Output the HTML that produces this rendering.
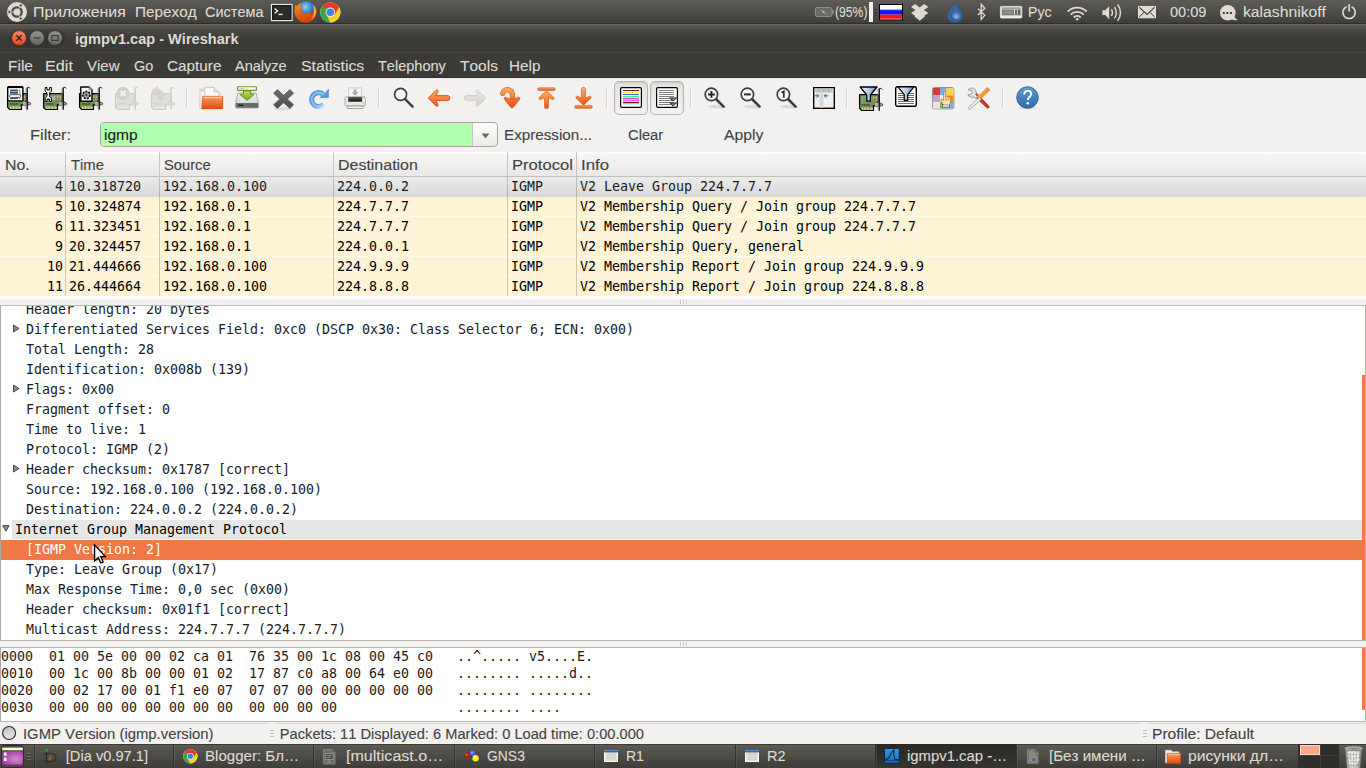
<!DOCTYPE html>
<html lang='en'><head><meta charset='utf-8'><title>igmpv1.cap - Wireshark</title>
<style>
html,body{margin:0;padding:0;}
body{width:1366px;height:768px;overflow:hidden;position:relative;background:#f2f1f0;font-kerning:none;font-variant-ligatures:none;}
.t{position:absolute;white-space:pre;line-height:20px;transform-origin:0 0;}
.sans{font-family:'Liberation Sans',sans-serif;font-size:14.67px;-webkit-text-stroke:0.12px;}
.sansb{font-family:'Liberation Sans',sans-serif;font-weight:bold;font-size:14.67px;}
.mono{font-family:'DejaVu Sans Mono','Liberation Mono',monospace;font-size:13.3px;letter-spacing:-0.0055px;}
svg{display:block;overflow:visible}
</style></head>
<body>
<div style='position:absolute;left:0px;top:0px;width:1366px;height:24px;background:linear-gradient(#5d5c56,#403f3b 94%,#2f2e2b 96%);'></div>
<span class='t sans' style='left:33.01px;top:2.00px;color:#dfdbd2;transform:scaleX(1.0823);'>Приложения</span>
<span class='t sans' style='left:134.56px;top:2.00px;color:#dfdbd2;transform:scaleX(1.0445);'>Переход</span>
<span class='t sans' style='left:205.26px;top:2.00px;color:#dfdbd2;transform:scaleX(0.9914);'>Система</span>
<span class='t sans' style='left:835.24px;top:2.00px;color:#dfdbd2;transform:scaleX(0.8308);'>(95%)</span>
<span class='t sans' style='left:1028.34px;top:2.00px;color:#dfdbd2;transform:scaleX(0.9622);'>Рус</span>
<span class='t sans' style='left:1169.73px;top:2.00px;color:#dfdbd2;transform:scaleX(0.9931);'>00:09</span>
<span class='t sans' style='left:1242.94px;top:2.00px;color:#dfdbd2;transform:scaleX(1.0719);'>kalashnikoff</span>
<div style='position:absolute;left:869px;top:2px;width:4px;height:20px;background:#f2f1f0;'></div>
<div style='position:absolute;left:875px;top:9px;width:2px;height:1px;background:#33322f;'></div>
<div style='position:absolute;left:875px;top:12px;width:2px;height:1px;background:#33322f;'></div>
<div style='position:absolute;left:875px;top:15px;width:2px;height:1px;background:#33322f;'></div>
<div style='position:absolute;left:0px;top:24px;width:1366px;height:29px;background:linear-gradient(#5d5b55,#4a4944 22%,#3c3b37 50%);'></div>
<div style='position:absolute;left:0px;top:24px;width:1366px;height:1px;background:#66645e;'></div>
<div style='position:absolute;left:9px;top:29px;width:57px;height:19px;background:rgba(30,29,27,0.22);border-radius:10px;box-shadow:0 1px 0 rgba(255,255,255,0.05);'></div>
<span class='t sansb' style='left:75.38px;top:29.00px;color:#dfdbd2;transform:scaleX(0.9940);'>igmpv1.cap - Wireshark</span>
<div style='position:absolute;left:0px;top:53px;width:1366px;height:25px;background:#3c3b37;'></div>
<div style='position:absolute;left:0px;top:52px;width:1366px;height:1px;background:#46453f;'></div>
<div style='position:absolute;left:0px;top:77px;width:1366px;height:1px;background:#31302d;'></div>
<span class='t sans' style='left:7.73px;top:56.00px;color:#dfdbd2;transform:scaleX(1.0559);'>File</span>
<span class='t sans' style='left:45.17px;top:56.00px;color:#dfdbd2;transform:scaleX(1.1057);'>Edit</span>
<span class='t sans' style='left:87.43px;top:56.00px;color:#dfdbd2;transform:scaleX(1.0230);'>View</span>
<span class='t sans' style='left:133.77px;top:56.00px;color:#dfdbd2;transform:scaleX(0.9882);'>Go</span>
<span class='t sans' style='left:166.72px;top:56.00px;color:#dfdbd2;transform:scaleX(1.0434);'>Capture</span>
<span class='t sans' style='left:235.47px;top:56.00px;color:#dfdbd2;transform:scaleX(0.9901);'>Analyze</span>
<span class='t sans' style='left:300.78px;top:56.00px;color:#dfdbd2;transform:scaleX(1.0783);'>Statistics</span>
<span class='t sans' style='left:378.17px;top:56.00px;color:#dfdbd2;transform:scaleX(0.9905);'>Telephony</span>
<span class='t sans' style='left:460.15px;top:56.00px;color:#dfdbd2;transform:scaleX(1.0567);'>Tools</span>
<span class='t sans' style='left:509.25px;top:56.00px;color:#dfdbd2;transform:scaleX(1.0405);'>Help</span>
<div style='position:absolute;left:0px;top:78px;width:1366px;height:74px;background:#f2f1f0;'></div>
<div style='position:absolute;left:186px;top:87px;width:1px;height:21px;background:#dad7d3;'></div>
<div style='position:absolute;left:187px;top:87px;width:1px;height:21px;background:#fafaf9;'></div>
<div style='position:absolute;left:378px;top:87px;width:1px;height:21px;background:#dad7d3;'></div>
<div style='position:absolute;left:379px;top:87px;width:1px;height:21px;background:#fafaf9;'></div>
<div style='position:absolute;left:606px;top:87px;width:1px;height:21px;background:#dad7d3;'></div>
<div style='position:absolute;left:607px;top:87px;width:1px;height:21px;background:#fafaf9;'></div>
<div style='position:absolute;left:690px;top:87px;width:1px;height:21px;background:#dad7d3;'></div>
<div style='position:absolute;left:691px;top:87px;width:1px;height:21px;background:#fafaf9;'></div>
<div style='position:absolute;left:846px;top:87px;width:1px;height:21px;background:#dad7d3;'></div>
<div style='position:absolute;left:847px;top:87px;width:1px;height:21px;background:#fafaf9;'></div>
<div style='position:absolute;left:1002px;top:87px;width:1px;height:21px;background:#dad7d3;'></div>
<div style='position:absolute;left:1003px;top:87px;width:1px;height:21px;background:#fafaf9;'></div>
<div style='position:absolute;left:614px;top:81px;width:34px;height:34px;background:linear-gradient(#e3e1de,#f4f3f2);border:1px solid #b9b5ae;border-radius:5px;box-sizing:border-box;box-shadow:inset 0 1px 2px rgba(0,0,0,0.12);'></div>
<div style='position:absolute;left:650px;top:81px;width:34px;height:34px;background:linear-gradient(#e3e1de,#f4f3f2);border:1px solid #b9b5ae;border-radius:5px;box-sizing:border-box;box-shadow:inset 0 1px 2px rgba(0,0,0,0.12);'></div>
<div style='position:absolute;left:100px;top:122px;width:398px;height:25px;background:linear-gradient(#fcfcfb,#eceae7);border:1px solid #a9a59d;border-radius:4px;box-sizing:border-box;'></div>
<div style='position:absolute;left:101px;top:123px;width:371px;height:23px;background:#afffaf;border-radius:3px 0 0 3px;'></div>
<div style='position:absolute;left:472px;top:123px;width:1px;height:23px;background:#c9c5be;'></div>
<svg style='position:absolute;left:480px;top:132px' width='11' height='8'><path d='M1.500 1.500h8l-4 5z' fill='#706e69'/></svg>
<span class='t sans' style='left:29.65px;top:125.00px;color:#424242;transform:scaleX(1.1221);'>Filter:</span>
<span class='t sans' style='left:104.16px;top:125.00px;color:#1a1a1a;transform:scaleX(1.0629);'>igmp</span>
<span class='t sans' style='left:504.15px;top:125.00px;color:#424242;transform:scaleX(1.0383);'>Expression...</span>
<span class='t sans' style='left:627.75px;top:125.00px;color:#424242;transform:scaleX(1.0039);'>Clear</span>
<span class='t sans' style='left:724.07px;top:125.00px;color:#424242;transform:scaleX(1.0726);'>Apply</span>
<div style='position:absolute;left:0px;top:152px;width:1366px;height:24px;background:linear-gradient(#ffffff,#f6f5f4 12%,#e9e8e6);'></div>
<div style='position:absolute;left:0px;top:176px;width:1366px;height:1px;background:#c4c1bc;'></div>
<div style='position:absolute;left:65px;top:152px;width:1px;height:25px;background:#c9c6c1;'></div>
<div style='position:absolute;left:159px;top:152px;width:1px;height:25px;background:#c9c6c1;'></div>
<div style='position:absolute;left:333px;top:152px;width:1px;height:25px;background:#c9c6c1;'></div>
<div style='position:absolute;left:507px;top:152px;width:1px;height:25px;background:#c9c6c1;'></div>
<div style='position:absolute;left:576px;top:152px;width:1px;height:25px;background:#c9c6c1;'></div>
<span class='t sans' style='left:4.70px;top:155.00px;color:#424242;transform:scaleX(1.0796);'>No.</span>
<span class='t sans' style='left:71.17px;top:155.00px;color:#424242;transform:scaleX(1.0121);'>Time</span>
<span class='t sans' style='left:164.33px;top:155.00px;color:#424242;transform:scaleX(1.0052);'>Source</span>
<span class='t sans' style='left:337.99px;top:155.00px;color:#424242;transform:scaleX(1.0893);'>Destination</span>
<span class='t sans' style='left:511.94px;top:155.00px;color:#424242;transform:scaleX(1.1330);'>Protocol</span>
<span class='t sans' style='left:580.74px;top:155.00px;color:#424242;transform:scaleX(1.1511);'>Info</span>
<div style='position:absolute;left:0px;top:177px;width:1366px;height:20px;background:linear-gradient(#ececec,#d8d8d8);'></div>
<div style='position:absolute;left:0px;top:197px;width:1366px;height:19px;background:#fff3d6;'></div>
<div style='position:absolute;left:0px;top:216px;width:1366px;height:1px;background:#fffaee;'></div>
<div style='position:absolute;left:0px;top:217px;width:1366px;height:19px;background:#fff3d6;'></div>
<div style='position:absolute;left:0px;top:236px;width:1366px;height:1px;background:#fffaee;'></div>
<div style='position:absolute;left:0px;top:237px;width:1366px;height:19px;background:#fff3d6;'></div>
<div style='position:absolute;left:0px;top:256px;width:1366px;height:1px;background:#fffaee;'></div>
<div style='position:absolute;left:0px;top:257px;width:1366px;height:19px;background:#fff3d6;'></div>
<div style='position:absolute;left:0px;top:276px;width:1366px;height:1px;background:#fffaee;'></div>
<div style='position:absolute;left:0px;top:277px;width:1366px;height:19px;background:#fff3d6;'></div>
<div style='position:absolute;left:0px;top:296px;width:1366px;height:1px;background:#fffaee;'></div>
<div style='position:absolute;left:65px;top:177px;width:1px;height:119px;background:rgba(120,115,105,0.35);'></div>
<div style='position:absolute;left:159px;top:177px;width:1px;height:119px;background:rgba(120,115,105,0.35);'></div>
<div style='position:absolute;left:333px;top:177px;width:1px;height:119px;background:rgba(120,115,105,0.35);'></div>
<div style='position:absolute;left:507px;top:177px;width:1px;height:119px;background:rgba(120,115,105,0.35);'></div>
<div style='position:absolute;left:576px;top:177px;width:1px;height:119px;background:rgba(120,115,105,0.35);'></div>
<span class='t mono' style='left:55.00px;top:177.00px;color:#1a1a1a;'>4</span>
<span class='t mono' style='left:69.00px;top:177.00px;color:#1a1a1a;'>10.318720</span>
<span class='t mono' style='left:163.00px;top:177.00px;color:#1a1a1a;'>192.168.0.100</span>
<span class='t mono' style='left:337.00px;top:177.00px;color:#1a1a1a;'>224.0.0.2</span>
<span class='t mono' style='left:511.00px;top:177.00px;color:#1a1a1a;'>IGMP</span>
<span class='t mono' style='left:580.00px;top:177.00px;color:#1a1a1a;'>V2 Leave Group 224.7.7.7</span>
<span class='t mono' style='left:55.00px;top:197.00px;color:#000;'>5</span>
<span class='t mono' style='left:69.00px;top:197.00px;color:#000;'>10.324874</span>
<span class='t mono' style='left:163.00px;top:197.00px;color:#000;'>192.168.0.1</span>
<span class='t mono' style='left:337.00px;top:197.00px;color:#000;'>224.7.7.7</span>
<span class='t mono' style='left:511.00px;top:197.00px;color:#000;'>IGMP</span>
<span class='t mono' style='left:580.00px;top:197.00px;color:#000;'>V2 Membership Query / Join group 224.7.7.7</span>
<span class='t mono' style='left:55.00px;top:217.00px;color:#000;'>6</span>
<span class='t mono' style='left:69.00px;top:217.00px;color:#000;'>11.323451</span>
<span class='t mono' style='left:163.00px;top:217.00px;color:#000;'>192.168.0.1</span>
<span class='t mono' style='left:337.00px;top:217.00px;color:#000;'>224.7.7.7</span>
<span class='t mono' style='left:511.00px;top:217.00px;color:#000;'>IGMP</span>
<span class='t mono' style='left:580.00px;top:217.00px;color:#000;'>V2 Membership Query / Join group 224.7.7.7</span>
<span class='t mono' style='left:55.00px;top:237.00px;color:#000;'>9</span>
<span class='t mono' style='left:69.00px;top:237.00px;color:#000;'>20.324457</span>
<span class='t mono' style='left:163.00px;top:237.00px;color:#000;'>192.168.0.1</span>
<span class='t mono' style='left:337.00px;top:237.00px;color:#000;'>224.0.0.1</span>
<span class='t mono' style='left:511.00px;top:237.00px;color:#000;'>IGMP</span>
<span class='t mono' style='left:580.00px;top:237.00px;color:#000;'>V2 Membership Query, general</span>
<span class='t mono' style='left:47.00px;top:257.00px;color:#000;'>10</span>
<span class='t mono' style='left:69.00px;top:257.00px;color:#000;'>21.444666</span>
<span class='t mono' style='left:163.00px;top:257.00px;color:#000;'>192.168.0.100</span>
<span class='t mono' style='left:337.00px;top:257.00px;color:#000;'>224.9.9.9</span>
<span class='t mono' style='left:511.00px;top:257.00px;color:#000;'>IGMP</span>
<span class='t mono' style='left:580.00px;top:257.00px;color:#000;'>V2 Membership Report / Join group 224.9.9.9</span>
<span class='t mono' style='left:47.00px;top:277.00px;color:#000;'>11</span>
<span class='t mono' style='left:69.00px;top:277.00px;color:#000;'>26.444664</span>
<span class='t mono' style='left:163.00px;top:277.00px;color:#000;'>192.168.0.100</span>
<span class='t mono' style='left:337.00px;top:277.00px;color:#000;'>224.8.8.8</span>
<span class='t mono' style='left:511.00px;top:277.00px;color:#000;'>IGMP</span>
<span class='t mono' style='left:580.00px;top:277.00px;color:#000;'>V2 Membership Report / Join group 224.8.8.8</span>
<div style='position:absolute;left:0px;top:296px;width:1366px;height:3px;background:#ffffff;'></div>
<div style='position:absolute;left:0px;top:299px;width:1366px;height:6px;background:#f2f1f0;'></div>
<div style='position:absolute;left:680px;top:300px;width:1px;height:4px;background:#cbc8c3;'></div>
<div style='position:absolute;left:681px;top:300px;width:1px;height:4px;background:#fff;'></div>
<div style='position:absolute;left:683px;top:300px;width:1px;height:4px;background:#cbc8c3;'></div>
<div style='position:absolute;left:684px;top:300px;width:1px;height:4px;background:#fff;'></div>
<div style='position:absolute;left:686px;top:300px;width:1px;height:4px;background:#cbc8c3;'></div>
<div style='position:absolute;left:687px;top:300px;width:1px;height:4px;background:#fff;'></div>
<div style='position:absolute;left:0px;top:305px;width:1366px;height:336px;background:#fff;border:1px solid #bab6b0;border-left-color:#aeaaa3;box-sizing:border-box;'></div>
<div style='position:absolute;left:12px;top:520px;width:1353px;height:19px;background:#e6e6e6;'></div>
<div style='position:absolute;left:1px;top:540px;width:1364px;height:20px;background:#f07746;'></div>
<div style='position:absolute;left:0;top:306px;width:1366px;height:334px;overflow:hidden'>
<span class='t mono' style='left:26.00px;top:-6.00px;color:#1a1a1a;'>Header length: 20 bytes</span>
<span class='t mono' style='left:26.00px;top:14.00px;color:#1a1a1a;'>Differentiated Services Field: 0xc0 (DSCP 0x30: Class Selector 6; ECN: 0x00)</span>
<svg style='position:absolute;left:12px;top:18px' width='9' height='9'><path d='M1.500 1v7l5.600-3.500z' fill='#8a8a8a' stroke='#3f3f3f' stroke-width='0.900' stroke-linejoin='round'/></svg>
<span class='t mono' style='left:26.00px;top:34.00px;color:#1a1a1a;'>Total Length: 28</span>
<span class='t mono' style='left:26.00px;top:54.00px;color:#1a1a1a;'>Identification: 0x008b (139)</span>
<span class='t mono' style='left:26.00px;top:74.00px;color:#1a1a1a;'>Flags: 0x00</span>
<svg style='position:absolute;left:12px;top:78px' width='9' height='9'><path d='M1.500 1v7l5.600-3.500z' fill='#8a8a8a' stroke='#3f3f3f' stroke-width='0.900' stroke-linejoin='round'/></svg>
<span class='t mono' style='left:26.00px;top:94.00px;color:#1a1a1a;'>Fragment offset: 0</span>
<span class='t mono' style='left:26.00px;top:114.00px;color:#1a1a1a;'>Time to live: 1</span>
<span class='t mono' style='left:26.00px;top:134.00px;color:#1a1a1a;'>Protocol: IGMP (2)</span>
<span class='t mono' style='left:26.00px;top:154.00px;color:#1a1a1a;'>Header checksum: 0x1787 [correct]</span>
<svg style='position:absolute;left:12px;top:158px' width='9' height='9'><path d='M1.500 1v7l5.600-3.500z' fill='#8a8a8a' stroke='#3f3f3f' stroke-width='0.900' stroke-linejoin='round'/></svg>
<span class='t mono' style='left:26.00px;top:174.00px;color:#1a1a1a;'>Source: 192.168.0.100 (192.168.0.100)</span>
<span class='t mono' style='left:26.00px;top:194.00px;color:#1a1a1a;'>Destination: 224.0.0.2 (224.0.0.2)</span>
<span class='t mono' style='left:15.00px;top:214.00px;color:#000;'>Internet Group Management Protocol</span>
<svg style='position:absolute;left:2px;top:218px' width='9' height='9'><path d='M0.600 1.600h6.600l-3.300 5.600z' fill='#8a8a8a' stroke='#3f3f3f' stroke-width='0.900' stroke-linejoin='round'/></svg>
<span class='t mono' style='left:26.00px;top:234.00px;color:#fff;'>[IGMP Version: 2]</span>
<span class='t mono' style='left:26.00px;top:254.00px;color:#1a1a1a;'>Type: Leave Group (0x17)</span>
<span class='t mono' style='left:26.00px;top:274.00px;color:#1a1a1a;'>Max Response Time: 0,0 sec (0x00)</span>
<span class='t mono' style='left:26.00px;top:294.00px;color:#1a1a1a;'>Header checksum: 0x01f1 [correct]</span>
<span class='t mono' style='left:26.00px;top:314.00px;color:#1a1a1a;'>Multicast Address: 224.7.7.7 (224.7.7.7)</span>
</div>
<div style='position:absolute;left:1362px;top:375px;width:3px;height:265px;background:#f07746;'></div>
<div style='position:absolute;left:0px;top:641px;width:1366px;height:6px;background:#f2f1f0;'></div>
<div style='position:absolute;left:680px;top:642px;width:1px;height:4px;background:#cbc8c3;'></div>
<div style='position:absolute;left:681px;top:642px;width:1px;height:4px;background:#fff;'></div>
<div style='position:absolute;left:683px;top:642px;width:1px;height:4px;background:#cbc8c3;'></div>
<div style='position:absolute;left:684px;top:642px;width:1px;height:4px;background:#fff;'></div>
<div style='position:absolute;left:686px;top:642px;width:1px;height:4px;background:#cbc8c3;'></div>
<div style='position:absolute;left:687px;top:642px;width:1px;height:4px;background:#fff;'></div>
<div style='position:absolute;left:0px;top:647px;width:1366px;height:75px;background:#fff;border:1px solid #bab6b0;border-left-color:#aeaaa3;box-sizing:border-box;'></div>
<span class='t mono' style='left:1.00px;top:647.00px;color:#1a1a1a;'>0000  01 00 5e 00 00 02 ca 01  76 35 00 1c 08 00 45 c0   ..^..... v5....E.</span>
<span class='t mono' style='left:1.00px;top:664.00px;color:#1a1a1a;'>0010  00 1c 00 8b 00 00 01 02  17 87 c0 a8 00 64 e0 00   ........ .....d..</span>
<span class='t mono' style='left:1.00px;top:681.00px;color:#1a1a1a;'>0020  00 02 17 00 01 f1 e0 07  07 07 00 00 00 00 00 00   ........ ........</span>
<span class='t mono' style='left:1.00px;top:698.00px;color:#1a1a1a;'>0030  00 00 00 00 00 00 00 00  00 00 00 00               ........ ....</span>
<div style='position:absolute;left:1362px;top:648px;width:3px;height:62px;background:#f07746;'></div>
<div style='position:absolute;left:0px;top:722px;width:1366px;height:22px;background:#f2f1f0;'></div>
<div style='position:absolute;left:19px;top:723px;width:250px;height:1px;background:#dcd9d5;'></div>
<div style='position:absolute;left:275px;top:723px;width:866px;height:1px;background:#dcd9d5;'></div>
<div style='position:absolute;left:1147px;top:723px;width:219px;height:1px;background:#dcd9d5;'></div>
<svg style='position:absolute;left:1px;top:725px' width='17' height='17'><defs><linearGradient id='gLed' x1='0' y1='0' x2='0' y2='1'><stop offset='0' stop-color='#c2c2c2'/><stop offset='1' stop-color='#e8e8e8'/></linearGradient></defs><circle cx='8.100' cy='8' r='6.500' fill='url(#gLed)' stroke='#2e2e2e' stroke-width='1.200'/></svg>
<div style='position:absolute;left:270px;top:730px;width:4px;height:1px;background:#c2bfba;'></div>
<div style='position:absolute;left:270px;top:733px;width:4px;height:1px;background:#c2bfba;'></div>
<div style='position:absolute;left:270px;top:736px;width:4px;height:1px;background:#c2bfba;'></div>
<div style='position:absolute;left:1143px;top:730px;width:4px;height:1px;background:#c2bfba;'></div>
<div style='position:absolute;left:1143px;top:733px;width:4px;height:1px;background:#c2bfba;'></div>
<div style='position:absolute;left:1143px;top:736px;width:4px;height:1px;background:#c2bfba;'></div>
<span class='t sans' style='left:23.43px;top:724.00px;color:#424242;transform:scaleX(1.0126);'>IGMP Version (igmp.version)</span>
<span class='t sans' style='left:279.80px;top:724.00px;color:#424242;'>Packets: 11 Displayed: 6 Marked: 0 Load time: 0:00.000</span>
<span class='t sans' style='left:1151.62px;top:724.00px;color:#424242;transform:scaleX(1.0632);'>Profile: Default</span>
<div style='position:absolute;left:0px;top:744px;width:1366px;height:24px;background:linear-gradient(#3b3a36 0,#3b3a36 4%,#5b5a54 5%,#4c4b46 50%,#3e3d39);'></div>
<div style='position:absolute;left:875px;top:744px;width:141px;height:24px;background:linear-gradient(#2b2a27,#353431);'></div>
<div style='position:absolute;left:34px;top:745px;width:1px;height:23px;background:#33322f;'></div>
<div style='position:absolute;left:35px;top:745px;width:1px;height:23px;background:rgba(255,255,255,0.07);'></div>
<div style='position:absolute;left:173px;top:745px;width:1px;height:23px;background:#33322f;'></div>
<div style='position:absolute;left:174px;top:745px;width:1px;height:23px;background:rgba(255,255,255,0.07);'></div>
<div style='position:absolute;left:313px;top:745px;width:1px;height:23px;background:#33322f;'></div>
<div style='position:absolute;left:314px;top:745px;width:1px;height:23px;background:rgba(255,255,255,0.07);'></div>
<div style='position:absolute;left:454px;top:745px;width:1px;height:23px;background:#33322f;'></div>
<div style='position:absolute;left:455px;top:745px;width:1px;height:23px;background:rgba(255,255,255,0.07);'></div>
<div style='position:absolute;left:594px;top:745px;width:1px;height:23px;background:#33322f;'></div>
<div style='position:absolute;left:595px;top:745px;width:1px;height:23px;background:rgba(255,255,255,0.07);'></div>
<div style='position:absolute;left:735px;top:745px;width:1px;height:23px;background:#33322f;'></div>
<div style='position:absolute;left:736px;top:745px;width:1px;height:23px;background:rgba(255,255,255,0.07);'></div>
<div style='position:absolute;left:875px;top:745px;width:1px;height:23px;background:#33322f;'></div>
<div style='position:absolute;left:876px;top:745px;width:1px;height:23px;background:rgba(255,255,255,0.07);'></div>
<div style='position:absolute;left:1016px;top:745px;width:1px;height:23px;background:#33322f;'></div>
<div style='position:absolute;left:1017px;top:745px;width:1px;height:23px;background:rgba(255,255,255,0.07);'></div>
<div style='position:absolute;left:1156px;top:745px;width:1px;height:23px;background:#33322f;'></div>
<div style='position:absolute;left:1157px;top:745px;width:1px;height:23px;background:rgba(255,255,255,0.07);'></div>
<span class='t sans' style='left:65.75px;top:746.00px;color:#dfdbd2;'>[Dia v0.97.1]</span>
<span class='t sans' style='left:204.76px;top:746.00px;color:#dfdbd2;transform:scaleX(1.0285);'>Blogger: Бл…</span>
<span class='t sans' style='left:345.55px;top:746.00px;color:#dfdbd2;transform:scaleX(1.0953);'>[multicast.o…</span>
<span class='t sans' style='left:486.60px;top:746.00px;color:#dfdbd2;transform:scaleX(0.9490);'>GNS3</span>
<span class='t sans' style='left:626.05px;top:746.00px;color:#dfdbd2;transform:scaleX(0.9564);'>R1</span>
<span class='t sans' style='left:766.80px;top:746.00px;color:#dfdbd2;transform:scaleX(0.9934);'>R2</span>
<span class='t sans' style='left:907.40px;top:746.00px;color:#dfdbd2;transform:scaleX(1.0149);'>igmpv1.cap -…</span>
<span class='t sans' style='left:1048.52px;top:746.00px;color:#dfdbd2;transform:scaleX(1.0307);'>[Без имени …</span>
<span class='t sans' style='left:1187.99px;top:746.00px;color:#dfdbd2;transform:scaleX(1.0708);'>рисунки дл…</span>
<div style='position:absolute;left:1298px;top:744px;width:41px;height:24px;background:#2f2e2b;'></div>
<div style='position:absolute;left:1300px;top:745px;width:20px;height:10px;background:#f8a58a;border:1px solid #fcd9cc;box-sizing:border-box;'></div>
<div style='position:absolute;left:1298px;top:755px;width:41px;height:1px;background:#403f3b;'></div>
<div style='position:absolute;left:1320px;top:744px;width:1px;height:24px;background:#403f3b;'></div>
<div style='position:absolute;left:27px;top:753px;width:4px;height:1px;background:#6b6a64;'></div>
<div style='position:absolute;left:27px;top:754px;width:4px;height:1px;background:#3a3935;'></div>
<div style='position:absolute;left:27px;top:756px;width:4px;height:1px;background:#6b6a64;'></div>
<div style='position:absolute;left:27px;top:757px;width:4px;height:1px;background:#3a3935;'></div>
<div style='position:absolute;left:27px;top:759px;width:4px;height:1px;background:#6b6a64;'></div>
<div style='position:absolute;left:27px;top:760px;width:4px;height:1px;background:#3a3935;'></div>
<svg width='0' height='0' style='position:absolute'><defs>
<linearGradient id='gOr' x1='0' y1='0' x2='0' y2='1'><stop offset='0' stop-color='#f9b26a'/><stop offset='1' stop-color='#e8541a'/></linearGradient>
<linearGradient id='gOrH' x1='0' y1='0' x2='1' y2='1'><stop offset='0' stop-color='#f8a95c'/><stop offset='1' stop-color='#e9561b'/></linearGradient>
<linearGradient id='gGy' x1='0' y1='0' x2='0' y2='1'><stop offset='0' stop-color='#e9e7e4'/><stop offset='1' stop-color='#d3d0cc'/></linearGradient>
<linearGradient id='gFold' x1='0' y1='0' x2='0' y2='1'><stop offset='0' stop-color='#f6c48a'/><stop offset='0.25' stop-color='#f08a4a'/><stop offset='1' stop-color='#e24a12'/></linearGradient>
<linearGradient id='gBlue' x1='0' y1='0' x2='0' y2='1'><stop offset='0' stop-color='#5e9bd6'/><stop offset='1' stop-color='#2f6aa6'/></linearGradient>
<linearGradient id='gFun' x1='0' y1='0' x2='1' y2='0'><stop offset='0' stop-color='#ffffff'/><stop offset='1' stop-color='#6f9bd0'/></linearGradient>
<linearGradient id='gGrn' x1='0' y1='0' x2='0' y2='1'><stop offset='0' stop-color='#c6e05a'/><stop offset='1' stop-color='#6fa81f'/></linearGradient>
<linearGradient id='gHdd' x1='0' y1='0' x2='0' y2='1'><stop offset='0' stop-color='#f4f4f3'/><stop offset='1' stop-color='#c9c9c7'/></linearGradient>
<linearGradient id='gPcb' x1='0' y1='0' x2='1' y2='1'><stop offset='0' stop-color='#8aa86f'/><stop offset='1' stop-color='#5c7c47'/></linearGradient>
<linearGradient id='gOrS' gradientUnits='userSpaceOnUse' x1='0' y1='0' x2='0' y2='16'><stop offset='0' stop-color='#f9b56e'/><stop offset='1' stop-color='#ee6a2a'/></linearGradient>
<linearGradient id='gOr2' x1='0' y1='0' x2='0' y2='1'><stop offset='0' stop-color='#f07a34'/><stop offset='1' stop-color='#e8541a'/></linearGradient>
<linearGradient id='gBtn' x1='0' y1='0' x2='0' y2='1'><stop offset='0' stop-color='#e4e2df'/><stop offset='0.5' stop-color='#eceae8'/><stop offset='1' stop-color='#f6f5f4'/></linearGradient>
<linearGradient id='gWb' x1='0' y1='0' x2='0' y2='1'><stop offset='0' stop-color='#97958e'/><stop offset='1' stop-color='#65635d'/></linearGradient></defs></svg>
<svg style='position:absolute;left:7px;top:86px' width='24' height='24' viewBox='0 0 24 24' preserveAspectRatio='none'><g opacity='1'>
<path d='M0.600 7.600h19v7.600h-1v3.700h-4.200v4.500h-11.800l-2-2z' fill='url(#gPcb)' stroke='#000' stroke-width='1.300' stroke-linejoin='round'/>
<rect x='2.800' y='20.600' width='11' height='2.200' fill='#e9d88e'/>
<rect x='4.300' y='20.600' width='1' height='2.200' fill='#6f8a57'/><rect x='7.300' y='20.600' width='1' height='2.200' fill='#6f8a57'/><rect x='10.300' y='20.600' width='1' height='2.200' fill='#6f8a57'/>
<rect x='2.800' y='17' width='7.800' height='1.700' fill='#3d4a2b'/>
<rect x='4.400' y='17' width='0.700' height='1.700' fill='#6f8a57'/><rect x='6.400' y='17' width='0.700' height='1.700' fill='#6f8a57'/><rect x='8.400' y='17' width='0.700' height='1.700' fill='#6f8a57'/>
<rect x='14' y='9.600' width='1' height='4.400' fill='#d9c9a0'/><rect x='16.600' y='9.600' width='1' height='4.400' fill='#d9c9a0'/>
<rect x='14' y='12' width='1' height='1.300' fill='#d8452a'/><rect x='16.600' y='12' width='1' height='1.300' fill='#d8452a'/>
<rect x='8.600' y='10' width='3.800' height='4.200' rx='1' fill='#b0b0ae'/>
<rect x='16' y='16' width='4' height='3' fill='#b0b0ae'/>
<path d='M20.200 1.600v22.200' stroke='#000' stroke-width='1.300' fill='none'/>
<path d='M20.200 2.200c0.800-1.200 2.200-1 3 0.200' stroke='#000' stroke-width='1' fill='none'/>
<path d='M19 2.500v20' stroke='#8a8a8a' stroke-width='0.800' fill='none'/>
<path d='M21 15.800l2.600 1.200v1.600l-2.600 0.600z' fill='#b0b0ae' stroke='#000' stroke-width='0.500'/>
</g>
<rect x='0.7' y='0.7' width='15.2' height='14.2' rx='1' fill='#fff' stroke='#000' stroke-width='1.4'/>
<rect x='0.7' y='0.5' width='15.2' height='1.6' fill='#000'/>
<path d='M3 4.2h8M3 6.2h8M3 8h8M3 12.2h8' stroke='#000' stroke-width='1'/>
<path d='M12.3 4.2h1M12.3 6.2h1M12.3 8.2h1M12.3 12.2h1' stroke='#000' stroke-width='1'/>
<rect x='2.4' y='8.7' width='11.2' height='2.8' rx='1.4' fill='#fff' stroke='#3a6a9a' stroke-width='1'/>
</svg>
<svg style='position:absolute;left:43px;top:86px' width='24' height='24' viewBox='0 0 24 24' preserveAspectRatio='none'><g opacity='1'>
<path d='M0.600 7.600h19v7.600h-1v3.700h-4.200v4.500h-11.800l-2-2z' fill='url(#gPcb)' stroke='#000' stroke-width='1.300' stroke-linejoin='round'/>
<rect x='2.800' y='20.600' width='11' height='2.200' fill='#e9d88e'/>
<rect x='4.300' y='20.600' width='1' height='2.200' fill='#6f8a57'/><rect x='7.300' y='20.600' width='1' height='2.200' fill='#6f8a57'/><rect x='10.300' y='20.600' width='1' height='2.200' fill='#6f8a57'/>
<rect x='2.800' y='17' width='7.800' height='1.700' fill='#3d4a2b'/>
<rect x='4.400' y='17' width='0.700' height='1.700' fill='#6f8a57'/><rect x='6.400' y='17' width='0.700' height='1.700' fill='#6f8a57'/><rect x='8.400' y='17' width='0.700' height='1.700' fill='#6f8a57'/>
<rect x='14' y='9.600' width='1' height='4.400' fill='#d9c9a0'/><rect x='16.600' y='9.600' width='1' height='4.400' fill='#d9c9a0'/>
<rect x='14' y='12' width='1' height='1.300' fill='#d8452a'/><rect x='16.600' y='12' width='1' height='1.300' fill='#d8452a'/>
<rect x='8.600' y='10' width='3.800' height='4.200' rx='1' fill='#b0b0ae'/>
<rect x='16' y='16' width='4' height='3' fill='#b0b0ae'/>
<path d='M20.200 1.600v22.200' stroke='#000' stroke-width='1.300' fill='none'/>
<path d='M20.200 2.200c0.800-1.200 2.200-1 3 0.200' stroke='#000' stroke-width='1' fill='none'/>
<path d='M19 2.500v20' stroke='#8a8a8a' stroke-width='0.800' fill='none'/>
<path d='M21 15.800l2.600 1.200v1.600l-2.600 0.600z' fill='#b0b0ae' stroke='#000' stroke-width='0.500'/>
</g>
<path transform='translate(0,0.700)' d='M2.2 0.8h1.8v2.4h2.6v-2.4h1.8v3.6l-1.8 1.8v3.4l1.8 1.8v3.4h-1.8v-2.4h-2.6v2.4h-1.8v-3.4l1.8-1.8v-3.4l-1.8-1.8z' fill='#fff' stroke='#000' stroke-width='1' stroke-linejoin='round'/>
</svg>
<svg style='position:absolute;left:79px;top:86px' width='24' height='24' viewBox='0 0 24 24' preserveAspectRatio='none'><g opacity='1'>
<path d='M0.600 7.600h19v7.600h-1v3.700h-4.200v4.500h-11.800l-2-2z' fill='url(#gPcb)' stroke='#000' stroke-width='1.300' stroke-linejoin='round'/>
<rect x='2.800' y='20.600' width='11' height='2.200' fill='#e9d88e'/>
<rect x='4.300' y='20.600' width='1' height='2.200' fill='#6f8a57'/><rect x='7.300' y='20.600' width='1' height='2.200' fill='#6f8a57'/><rect x='10.300' y='20.600' width='1' height='2.200' fill='#6f8a57'/>
<rect x='2.800' y='17' width='7.800' height='1.700' fill='#3d4a2b'/>
<rect x='4.400' y='17' width='0.700' height='1.700' fill='#6f8a57'/><rect x='6.400' y='17' width='0.700' height='1.700' fill='#6f8a57'/><rect x='8.400' y='17' width='0.700' height='1.700' fill='#6f8a57'/>
<rect x='14' y='9.600' width='1' height='4.400' fill='#d9c9a0'/><rect x='16.600' y='9.600' width='1' height='4.400' fill='#d9c9a0'/>
<rect x='14' y='12' width='1' height='1.300' fill='#d8452a'/><rect x='16.600' y='12' width='1' height='1.300' fill='#d8452a'/>
<rect x='8.600' y='10' width='3.800' height='4.200' rx='1' fill='#b0b0ae'/>
<rect x='16' y='16' width='4' height='3' fill='#b0b0ae'/>
<path d='M20.200 1.600v22.200' stroke='#000' stroke-width='1.300' fill='none'/>
<path d='M20.200 2.200c0.800-1.200 2.200-1 3 0.200' stroke='#000' stroke-width='1' fill='none'/>
<path d='M19 2.500v20' stroke='#8a8a8a' stroke-width='0.800' fill='none'/>
<path d='M21 15.800l2.600 1.200v1.600l-2.600 0.600z' fill='#b0b0ae' stroke='#000' stroke-width='0.500'/>
</g>
<path d='M1.8 1h8.2l3 3v11.2h-11.2z' fill='#fff' stroke='#000' stroke-width='1.4' stroke-linejoin='round'/>
<path d='M10 1v3h3' fill='#ddd' stroke='#555' stroke-width='0.6'/>
<circle cx='7.4' cy='9' r='3.6' fill='#8a8a86' stroke='#000' stroke-width='1.6' stroke-dasharray='2 1.1'/>
<circle cx='7.4' cy='9' r='2.6' fill='#9a9a96'/>
<circle cx='7.4' cy='9' r='1' fill='#333'/>
</svg>
<svg style='position:absolute;left:115px;top:86px' width='24' height='24' viewBox='0 0 24 24' preserveAspectRatio='none'><g opacity='1'>
<path d='M0.600 7.600h19v7.600h-1v3.700h-4.200v4.500h-11.800l-2-2z' fill='#e0deda' stroke='#cdcac6' stroke-width='1.300' stroke-linejoin='round'/>
<rect x='2.800' y='20.600' width='11' height='2.200' fill='#e9e7e4'/>
<rect x='4.300' y='20.600' width='1' height='2.200' fill='#dcdad6'/><rect x='7.300' y='20.600' width='1' height='2.200' fill='#dcdad6'/><rect x='10.300' y='20.600' width='1' height='2.200' fill='#dcdad6'/>
<rect x='2.800' y='17' width='7.800' height='1.700' fill='#d3d0cc'/>
<rect x='4.400' y='17' width='0.700' height='1.700' fill='#dcdad6'/><rect x='6.400' y='17' width='0.700' height='1.700' fill='#dcdad6'/><rect x='8.400' y='17' width='0.700' height='1.700' fill='#dcdad6'/>
<rect x='14' y='9.600' width='1' height='4.400' fill='#e8e6e3'/><rect x='16.600' y='9.600' width='1' height='4.400' fill='#e8e6e3'/>
<rect x='14' y='12' width='1' height='1.300' fill='#d8d5d2'/><rect x='16.600' y='12' width='1' height='1.300' fill='#d8d5d2'/>
<rect x='8.600' y='10' width='3.800' height='4.200' rx='1' fill='#dcdad7'/>
<rect x='16' y='16' width='4' height='3' fill='#dcdad7'/>
<path d='M20.200 1.600v22.200' stroke='#cdcac6' stroke-width='1.300' fill='none'/>
<path d='M20.200 2.200c0.800-1.200 2.200-1 3 0.200' stroke='#cdcac6' stroke-width='1' fill='none'/>
<path d='M19 2.500v20' stroke='#dddbd7' stroke-width='0.800' fill='none'/>
<path d='M21 15.800l2.600 1.200v1.600l-2.600 0.600z' fill='#dcdad7' stroke='#cdcac6' stroke-width='0.500'/>
</g>
<circle cx='8' cy='7.4' r='6.6' fill='#d4d1cd'/>
<path d='M5.6 5l4.8 4.8M10.4 5l-4.8 4.8' stroke='#f4f3f2' stroke-width='2.2' stroke-linecap='butt'/>
</svg>
<svg style='position:absolute;left:151px;top:86px' width='24' height='24' viewBox='0 0 24 24' preserveAspectRatio='none'><g opacity='1'>
<path d='M0.600 7.600h19v7.600h-1v3.700h-4.200v4.500h-11.800l-2-2z' fill='#e0deda' stroke='#cdcac6' stroke-width='1.300' stroke-linejoin='round'/>
<rect x='2.800' y='20.600' width='11' height='2.200' fill='#e9e7e4'/>
<rect x='4.300' y='20.600' width='1' height='2.200' fill='#dcdad6'/><rect x='7.300' y='20.600' width='1' height='2.200' fill='#dcdad6'/><rect x='10.300' y='20.600' width='1' height='2.200' fill='#dcdad6'/>
<rect x='2.800' y='17' width='7.800' height='1.700' fill='#d3d0cc'/>
<rect x='4.400' y='17' width='0.700' height='1.700' fill='#dcdad6'/><rect x='6.400' y='17' width='0.700' height='1.700' fill='#dcdad6'/><rect x='8.400' y='17' width='0.700' height='1.700' fill='#dcdad6'/>
<rect x='14' y='9.600' width='1' height='4.400' fill='#e8e6e3'/><rect x='16.600' y='9.600' width='1' height='4.400' fill='#e8e6e3'/>
<rect x='14' y='12' width='1' height='1.300' fill='#d8d5d2'/><rect x='16.600' y='12' width='1' height='1.300' fill='#d8d5d2'/>
<rect x='8.600' y='10' width='3.800' height='4.200' rx='1' fill='#dcdad7'/>
<rect x='16' y='16' width='4' height='3' fill='#dcdad7'/>
<path d='M20.200 1.600v22.200' stroke='#cdcac6' stroke-width='1.300' fill='none'/>
<path d='M20.200 2.200c0.800-1.200 2.200-1 3 0.200' stroke='#cdcac6' stroke-width='1' fill='none'/>
<path d='M19 2.500v20' stroke='#dddbd7' stroke-width='0.800' fill='none'/>
<path d='M21 15.800l2.600 1.200v1.600l-2.600 0.600z' fill='#dcdad7' stroke='#cdcac6' stroke-width='0.500'/>
</g>
<path d='M0.8 5.2l5.4-4.8v3c4.5 0 6.6 2.6 6.6 5.4c0 2.6-1.8 4.6-4.6 4.6v-2.8c1.2 0 2-0.8 2-1.9c0-1.4-1.2-2.3-4-2.3v3.4z' fill='#dbd8d4' stroke='#cfccc8' stroke-width='0.8' stroke-linejoin='round'/>
</svg>
<svg style='position:absolute;left:199px;top:86px' width='24' height='24' viewBox='0 0 24 24' preserveAspectRatio='none'>
<path d='M0.900 3h6.500v19.800h-6.500z' fill='#f3f2f0' stroke='#c4c1bd' stroke-width='0.800'/>
<rect x='1.800' y='4.400' width='3' height='0.900' fill='#f0a24a'/>
<path d='M6 1.300h9.200l4.400 4.400v16.800h-13.600z' fill='#f8f8f7' stroke='#bfbcb8' stroke-width='0.800' stroke-linejoin='round'/>
<path d='M15.200 1.300v4.400h4.400' fill='#e4e3e1' stroke='#bfbcb8' stroke-width='0.800' stroke-linejoin='round'/>
<path d='M19.800 6.500h1.400v16h-1.400z' fill='#ecebe9' stroke='#c9c6c2' stroke-width='0.600'/>
<path d='M3.800 10.400h19.800v12.300h-20.800z' fill='url(#gFold)' stroke='#d6460f' stroke-width='0.800' stroke-linejoin='round'/>
<path d='M4.400 11.200h18.600' stroke='#f9d9b0' stroke-width='0.900'/>
</svg>
<svg style='position:absolute;left:235px;top:86px' width='24' height='22.6' viewBox='0 0 24 24.200' preserveAspectRatio='none'>
<path d='M3 7.5h18l2.4 10.5v4.6c0 0.6-0.4 1-1 1h-20.8c-0.6 0-1-0.4-1-1v-4.6z' fill='url(#gHdd)' stroke='#a5a5a2' stroke-width='0.9' stroke-linejoin='round'/>
<ellipse cx='12' cy='14' rx='8.2' ry='3.8' fill='none' stroke='#dededc' stroke-width='1.2'/>
<path d='M0.8 18.2h22.4v4.2c0 0.6-0.4 1-1 1h-20.4c-0.6 0-1-0.4-1-1z' fill='#6b6b69'/>
<rect x='3.4' y='20' width='4.8' height='1.5' fill='#1a1a1a'/>
<rect x='2.6' y='0.8' width='18.8' height='4' rx='0.8' fill='#fff' stroke='#6a9a2a' stroke-width='1.3'/>
<path d='M4.6 2.8h5M11.8 1.8v2.2' stroke='#b9b9b6' stroke-width='0.9'/>
<path d='M8.4 5.2h7.2v3.6h3.6l-7.2 6.6l-7.2-6.6h3.6z' fill='url(#gGrn)' stroke='#5d8f1c' stroke-width='1' stroke-linejoin='round'/>
</svg>
<svg style='position:absolute;left:272.6px;top:89px' width='20.8' height='20' viewBox='0 0 20.8 20' preserveAspectRatio='none'>
<defs><linearGradient id='gCx' x1='0' y1='0' x2='0' y2='1'><stop offset='0' stop-color='#6e6e6c'/><stop offset='1' stop-color='#4e4e4c'/></linearGradient></defs>
<ellipse cx='10.600' cy='19.600' rx='9' ry='1.500' fill='#dbd9d5'/>
<path d='M0.600 4.200l3.700-3.600l6.300 5.700l6.300-5.700l3.700 3.600l-6.200 5.800l6.200 5.800l-3.700 3.600l-6.300-5.700l-6.300 5.700l-3.700-3.600l6.200-5.800z' fill='url(#gCx)' stroke='#4c4c4a' stroke-width='0.700' stroke-linejoin='round'/>
</svg>
<svg style='position:absolute;left:308px;top:87px' width='24' height='24' viewBox='0 0 24 24' preserveAspectRatio='none'>
<defs><linearGradient id='gRl' x1='0.200' y1='0' x2='1' y2='1'><stop offset='0' stop-color='#5a98d8'/><stop offset='0.720' stop-color='#6ba6e0'/><stop offset='1' stop-color='#8abcea' stop-opacity='0.150'/></linearGradient></defs>
<path d='M15.200 7.300A7 7 0 1 0 15.860 17.200' fill='none' stroke='url(#gRl)' stroke-width='5.200' stroke-linecap='butt'/>
<path d='M15.200 7.300A7 7 0 1 0 15.860 17.200' fill='none' stroke='#a9cff2' stroke-width='1.600' opacity='0.750'/>
<path d='M20.400 2.200v8.400h-8.600l3.600-2.600l2.400-2.600z' fill='#5a98d8' stroke='#4a8ad0' stroke-width='0.700' stroke-linejoin='round'/>
</svg>
<svg style='position:absolute;left:344px;top:86.6px' width='22.4' height='22.2' viewBox='0 0 24 24' preserveAspectRatio='none'>
<path d='M5 1h14v10h-14z' fill='#f6f6f5' stroke='#bdbdbb' stroke-width='0.8'/>
<path d='M10.6 2.6h2.8v3h2.4l-3.8 3.8l-3.8-3.8h2.4z' fill='#a9a9a7'/>
<path d='M2.6 10.6h18.8c1 0 1.6 0.6 1.6 1.6v7.2c0 0.8-0.6 1.2-1.4 1.2h-19.2c-0.8 0-1.4-0.4-1.4-1.2v-7.2c0-1 0.6-1.6 1.6-1.6z' fill='#e9e9e8' stroke='#a0a09e' stroke-width='0.9'/>
<rect x='4.6' y='11' width='14.8' height='5' fill='#2a2a2a'/>
<rect x='4.6' y='11' width='14.8' height='1.6' fill='#555'/>
<circle cx='20.6' cy='17.4' r='0.8' fill='#7ad03a'/>
<path d='M3.6 20.6h16.8v2c0 0.4-0.3 0.6-0.6 0.6h-15.6c-0.3 0-0.6-0.2-0.6-0.6z' fill='#fdfdfd' stroke='#8a8a88' stroke-width='0.9'/>
</svg>
<svg style='position:absolute;left:392px;top:86px' width='24' height='24' viewBox='0 0 24 24' preserveAspectRatio='none'>
<path d='M13.4 13.4l7.2 7.2' stroke='#3d3d3d' stroke-width='2.4' stroke-linecap='round'/>
<circle cx='8.6' cy='8.4' r='6' fill='#f4f4f3' stroke='#3d3d3d' stroke-width='1.6'/>
</svg>
<svg style='position:absolute;left:427px;top:89px' width='24' height='18' viewBox='0 0 24 18' preserveAspectRatio='none'><path d='M1.2 9.2l7.6-7.8c0.9-0.9 2.4-0.6 2.4 0.8l-2.2 4.4h11.6c1.6 0 2.2 1 2.2 2.4s-0.6 2.6-2.2 2.6h-11.6l2.2 4.4c0 1.4-1.5 1.7-2.4 0.8z' fill='url(#gOr)' stroke='#d9551c' stroke-width='0.9' stroke-linejoin='round'/></svg>
<svg style='position:absolute;left:463px;top:89px' width='24' height='18' viewBox='0 0 24 18' preserveAspectRatio='none'><g transform='translate(24,0) scale(-1,1)'><path d='M1.2 9.2l7.6-7.8c0.9-0.9 2.4-0.6 2.4 0.8l-2.2 4.4h11.6c1.6 0 2.2 1 2.2 2.4s-0.6 2.6-2.2 2.6h-11.6l2.2 4.4c0 1.4-1.5 1.7-2.4 0.8z' fill='url(#gGy)' stroke='#d0cdc9' stroke-width='0.9' stroke-linejoin='round'/></g></svg>
<svg style='position:absolute;left:498.6px;top:86px' width='23' height='23' viewBox='0 0 23 23' preserveAspectRatio='none'>
<path d='M3.800 7.400c0.800-3 3.600-4.200 6.200-3.500c3.200 1.100 4 4.500 3.200 9.600' fill='none' stroke='#dd5a1e' stroke-width='5.200' stroke-linecap='round'/>
<path d='M3.800 7.400c0.800-3 3.600-4.200 6.200-3.500c3.200 1.100 4 4.500 3.200 9.600' fill='none' stroke='url(#gOrS)' stroke-width='3.900' stroke-linecap='round'/>
<path d='M5.300 13.200c-0.800-1.100 0.200-2.300 1.500-1.900l4.200 1.700h4l4.200-1.700c1.300-0.400 2.300 0.800 1.500 1.900l-6.500 8.200c-0.600 0.800-1.800 0.800-2.400 0z' fill='url(#gOr2)' stroke='#dd5a1e' stroke-width='0.800' stroke-linejoin='round'/>
</svg>
<svg style='position:absolute;left:537px;top:87px' width='19' height='22' viewBox='0 0 19 22' preserveAspectRatio='none'>
<path d='M1.6 0.8h15.800c1.2 0 1.2 2.600 0 2.600h-15.800c-1.200 0-1.200-2.600 0-2.600z' fill='url(#gOr)' stroke='#e0621f' stroke-width='0.7'/>
<path d='M9.500 3.6l7.400 7c0.800 1-0.200 2.400-1.400 2l-4-1.800v9.600c0 1.600-4 1.600-4 0v-9.600l-4 1.800c-1.200 0.400-2.200-1-1.400-2z' fill='url(#gOr)' stroke='#e0621f' stroke-width='0.7' stroke-linejoin='round'/>
</svg>
<svg style='position:absolute;left:574px;top:87px' width='19' height='22' viewBox='0 0 19 22' preserveAspectRatio='none'>
<path d='M1.6 18.400h15.800c1.200 0 1.200 2.800 0 2.800h-15.800c-1.200 0-1.200-2.800 0-2.800z' fill='url(#gOr)' stroke='#e0621f' stroke-width='0.7'/>
<path d='M9.500 18.200l7.400-7c0.800-1-0.200-2.400-1.400-2l-4 1.800v-9.400c0-1.600-4-1.600-4 0v9.400l-4-1.800c-1.200-0.400-2.200 1-1.400 2z' fill='url(#gOr)' stroke='#e0621f' stroke-width='0.7' stroke-linejoin='round'/>
</svg>
<svg style='position:absolute;left:620px;top:87px' width='22' height='21' viewBox='0 0 22 21' preserveAspectRatio='none'>
<rect x='0.600' y='0.600' width='20.800' height='19.800' rx='1.300' fill='#fff' stroke='#000' stroke-width='1.200'/>
<path d='M3 3.500h16' stroke='#8b1a1a' stroke-width='1'/>
<path d='M3 5.500h16' stroke='#f4f45a' stroke-width='1.300'/>
<path d='M3 7.500h16' stroke='#4a6af0' stroke-width='1.200'/>
<path d='M3 9.500h16' stroke='#4af08a' stroke-width='1.200'/>
<path d='M3 11.300h16' stroke='#e04ae0' stroke-width='1.300'/>
<path d='M3 12.500h16' stroke='#9a9a9a' stroke-width='0.600'/>
<path d='M3 13.700h16' stroke='#ff4aff' stroke-width='1.200'/>
<path d='M3 15.500h16' stroke='#8b1a1a' stroke-width='1.100'/>
<path d='M3 16.700h16' stroke='#4ad8e8' stroke-width='1.200'/>
</svg>
<svg style='position:absolute;left:656px;top:87px' width='22' height='21' viewBox='0 0 22 21' preserveAspectRatio='none'>
<rect x='0.600' y='0.600' width='20.800' height='19.800' rx='1.300' fill='#fff' stroke='#000' stroke-width='1.200'/>
<path d='M3 3.5h15M3 5.500h15M3 7.500h15M3 9.500h15M3 11.500h15M3 13.500h15M3 15.500h15M3 17.500h12' stroke='#7e7e7e' stroke-width='1'/>
<path d='M13 10.400h8.300l-3.600 3.600h-1.200z' fill='#222'/><path d='M15 11.400h4.500l-1.900 1.700h-0.700z' fill='#999'/>
<path d='M13 15.400h8.300l-3.600 3.600h-1.200z' fill='#222'/><path d='M15 16.400h4.500l-1.900 1.700h-0.700z' fill='#999'/>
</svg>
<svg style='position:absolute;left:703px;top:86px' width='24' height='24' viewBox='0 0 24 24' preserveAspectRatio='none'>
<ellipse cx='14' cy='20.5' rx='9' ry='1.8' fill='#dcdad7'/>
<path d='M13 13l7.6 7.6' stroke='#3d3d3d' stroke-width='2.6' stroke-linecap='round'/>
<circle cx='8.4' cy='8.4' r='6.2' fill='#f7f7f6' stroke='#3d3d3d' stroke-width='1.7'/>
<path d='M5 8.4h6.8M8.4 5v6.8' stroke='#2a2a2a' stroke-width='2'/></svg>
<svg style='position:absolute;left:739px;top:86px' width='24' height='24' viewBox='0 0 24 24' preserveAspectRatio='none'>
<ellipse cx='14' cy='20.5' rx='9' ry='1.8' fill='#dcdad7'/>
<path d='M13 13l7.6 7.6' stroke='#3d3d3d' stroke-width='2.6' stroke-linecap='round'/>
<circle cx='8.4' cy='8.4' r='6.2' fill='#f7f7f6' stroke='#3d3d3d' stroke-width='1.7'/>
<path d='M5 8.4h6.8' stroke='#2a2a2a' stroke-width='2'/></svg>
<svg style='position:absolute;left:775px;top:86px' width='24' height='24' viewBox='0 0 24 24' preserveAspectRatio='none'>
<ellipse cx='14' cy='20.5' rx='9' ry='1.8' fill='#dcdad7'/>
<path d='M13 13l7.6 7.6' stroke='#3d3d3d' stroke-width='2.6' stroke-linecap='round'/>
<circle cx='8.4' cy='8.4' r='6.2' fill='#f7f7f6' stroke='#3d3d3d' stroke-width='1.7'/>
<path d='M6.6 6.6l2.2-1.4v6.6' stroke='#2a2a2a' stroke-width='1.7' fill='none'/></svg>
<svg style='position:absolute;left:813px;top:87px' width='22' height='22' viewBox='0 0 22 22' preserveAspectRatio='none'>
<rect x='0.700' y='0.700' width='20.600' height='20.600' fill='#f0f0ef' stroke='#000' stroke-width='1.400'/>
<rect x='1.400' y='1.400' width='19.200' height='4' fill='#c4c4c2'/>
<path d='M5.800 1.400v4M10.800 1.400v4M15.800 1.400v4' stroke='#a4a4a2' stroke-width='0.800'/>
<rect x='6.400' y='5.400' width='4' height='15.200' fill='#d9d9d8'/>
<path d='M1.400 8.800h4.200M3.600 7l2 1.800l-2 1.800' stroke='#2f5f8f' stroke-width='1' fill='none'/>
<path d='M15.400 8.800h-4.200M13.200 7l-2 1.800l2 1.800' stroke='#2f5f8f' stroke-width='1' fill='none'/>
</svg>
<svg style='position:absolute;left:859px;top:86px' width='24' height='25' viewBox='0 0 24 25' preserveAspectRatio='none'><g transform='translate(0,1)'><g opacity='1'>
<path d='M0.600 7.600h19v7.600h-1v3.700h-4.200v4.500h-11.800l-2-2z' fill='url(#gPcb)' stroke='#000' stroke-width='1.300' stroke-linejoin='round'/>
<rect x='2.800' y='20.600' width='11' height='2.200' fill='#e9d88e'/>
<rect x='4.300' y='20.600' width='1' height='2.200' fill='#6f8a57'/><rect x='7.300' y='20.600' width='1' height='2.200' fill='#6f8a57'/><rect x='10.300' y='20.600' width='1' height='2.200' fill='#6f8a57'/>
<rect x='2.800' y='17' width='7.800' height='1.700' fill='#3d4a2b'/>
<rect x='4.400' y='17' width='0.700' height='1.700' fill='#6f8a57'/><rect x='6.400' y='17' width='0.700' height='1.700' fill='#6f8a57'/><rect x='8.400' y='17' width='0.700' height='1.700' fill='#6f8a57'/>
<rect x='14' y='9.600' width='1' height='4.400' fill='#d9c9a0'/><rect x='16.600' y='9.600' width='1' height='4.400' fill='#d9c9a0'/>
<rect x='14' y='12' width='1' height='1.300' fill='#d8452a'/><rect x='16.600' y='12' width='1' height='1.300' fill='#d8452a'/>
<rect x='8.600' y='10' width='3.800' height='4.200' rx='1' fill='#b0b0ae'/>
<rect x='16' y='16' width='4' height='3' fill='#b0b0ae'/>
<path d='M20.200 1.600v22.200' stroke='#000' stroke-width='1.300' fill='none'/>
<path d='M20.200 2.200c0.800-1.200 2.200-1 3 0.200' stroke='#000' stroke-width='1' fill='none'/>
<path d='M19 2.500v20' stroke='#8a8a8a' stroke-width='0.800' fill='none'/>
<path d='M21 15.800l2.600 1.200v1.600l-2.600 0.600z' fill='#b0b0ae' stroke='#000' stroke-width='0.500'/>
</g></g><g transform='translate(0.6,0.4) scale(1)'><path d='M0.6 0.600h16.800l-6.600 8v6.200h-3.600v-6.200z' fill='url(#gFun)' stroke='#000' stroke-width='1.300' stroke-linejoin='round'/></g></svg>
<svg style='position:absolute;left:895px;top:86px' width='22' height='21' viewBox='0 0 22 21' preserveAspectRatio='none'>
<rect x='0.700' y='0.700' width='20.600' height='19.600' rx='1.500' fill='#fff' stroke='#000' stroke-width='1.400'/>
<path d='M3 7.500h16M3 9.500h16M3 11.500h16M3 13.500h16M3 15.500h16M3 17.500h16' stroke='#6e6e6e' stroke-width='1'/>
<g transform='translate(2.4,0.4) scale(0.95)'><path d='M0.6 0.600h16.800l-6.600 8v6.200h-3.600v-6.200z' fill='url(#gFun)' stroke='#000' stroke-width='1.300' stroke-linejoin='round'/></g></svg>
<svg style='position:absolute;left:932px;top:87px' width='22' height='22' viewBox='0 0 22 22' preserveAspectRatio='none'>
<rect x='0.500' y='0.500' width='21.400' height='21.400' rx='1.600' fill='#fff' stroke='#8a8a88' stroke-width='0.900'/>
<rect x='1' y='1' width='7' height='7.400' fill='#e2383a'/><rect x='8' y='1' width='6.600' height='7.400' fill='#7aaee6'/><rect x='14.600' y='1' width='6.800' height='7.400' fill='#f4d83a'/>
<rect x='1' y='8.400' width='7' height='6.600' fill='#c4a0cc'/><rect x='8' y='8.400' width='6.600' height='6.600' fill='#f0f0ee'/><rect x='14.600' y='8.400' width='6.800' height='6.600' fill='#f08a2a'/>
<rect x='1' y='15' width='7' height='6.400' fill='#e6e6e2'/><rect x='8' y='15' width='6.600' height='6.400' fill='#7ac23a'/><rect x='14.600' y='15' width='6.800' height='6.400' fill='#7aaee6'/>
<rect x='10.500' y='17.600' width='7' height='2.600' fill='#fff' stroke='#3a6aa8' stroke-width='0.900'/>
<path d='M11.400 5.600c0-1.600 2-1.600 2 0v4.600l0.600-0.800c0.600-0.400 1.400-0.200 1.400 0.600c0.600-0.600 1.600-0.400 1.600 0.400c0.800-0.400 1.600 0 1.600 0.800v3.800c0 1.600-0.800 2.600-1.600 3h-5c-1-0.600-2.400-3-3.200-4.800c-0.400-1 0.600-1.600 1.400-0.800l1.200 1.400z' fill='#fbe3b8' stroke='#c0721a' stroke-width='0.800' stroke-linejoin='round'/>
<path d='M13.400 10.600v3M15 10.600v3M16.600 10.900v2.700' stroke='#c0721a' stroke-width='0.600'/>
</svg>
<svg style='position:absolute;left:967px;top:87px' width='24' height='23' viewBox='0 0 24 23' preserveAspectRatio='none'>
<path d='M5.600 7.400l14.600 13.600c0.800 0.800 2.600-0.800 1.800-1.800l-13.800-14.400z' fill='#d8302e' stroke='#a81e1c' stroke-width='0.700'/>
<path d='M20.200 0.600l2.600 2.400l-10.200 9.800l-2.600-2.600z' fill='#f0a030' stroke='#c8761a' stroke-width='0.700'/>
<path d='M18.800 1.600l-9 9' stroke='#fbd48a' stroke-width='0.800'/>
<path d='M12.400 10.400l1.800 1.800l-11.200 10c-1 0.800-2.600-0.600-1.600-1.600z' fill='#f0f0ee' stroke='#9a9a98' stroke-width='0.800'/>
<path d='M7 1.400c-2-1-4.600-0.400-5.800 1.600l3 0.200l1.200 2.200l-1.600 2.400l-3-0.400c0.800 2.400 3.800 3.600 6 2.400l1.600 1.600l2-2l-1.600-1.600c1-2.200 0.200-4.800-1.800-6.400z' fill='#e4e4e2' stroke='#8a8a88' stroke-width='0.800' stroke-linejoin='round'/>
</svg>
<svg style='position:absolute;left:1015.5px;top:86.2px' width='23' height='23' viewBox='0 0 23 23' preserveAspectRatio='none'>
<ellipse cx='11.500' cy='22' rx='9' ry='1.200' fill='#dddbd8'/>
<circle cx='11.500' cy='11.500' r='10.800' fill='url(#gBlue)' stroke='#2c5f96' stroke-width='0.800'/>
<path d='M8.200 8.400c0-2.400 1.600-3.600 3.500-3.600c2 0 3.500 1.200 3.500 3.200c0 2.600-3.300 3-3.300 6' fill='none' stroke='#fff' stroke-width='1.900'/>
<circle cx='11.800' cy='17.200' r='1.300' fill='#fff'/>
</svg>
<svg style='position:absolute;left:6px;top:0.7px' width='22' height='22' viewBox='0 0 22 22' preserveAspectRatio='none'>
<circle cx='11' cy='11' r='10' fill='#dfdbd2'/>
<circle cx='11' cy='11' r='4.700' fill='none' stroke='#4b4943' stroke-width='2.300'/>
<path d='M8.000 11.000L4.000 11.000' stroke='#dfdbd2' stroke-width='0.900'/>
<path d='M12.500 8.402L14.500 4.938' stroke='#dfdbd2' stroke-width='0.900'/>
<path d='M12.500 13.598L14.500 17.062' stroke='#dfdbd2' stroke-width='0.900'/>
<circle cx='3.400' cy='11.000' r='1.450' fill='#4b4943' stroke='#dfdbd2' stroke-width='0.500'/>
<circle cx='14.800' cy='4.418' r='1.450' fill='#4b4943' stroke='#dfdbd2' stroke-width='0.500'/>
<circle cx='14.800' cy='17.582' r='1.450' fill='#4b4943' stroke='#dfdbd2' stroke-width='0.500'/>
</svg>
<svg style='position:absolute;left:271.3px;top:4.2px' width='21.5' height='17' viewBox='0 0 21.5 17' preserveAspectRatio='none'>
<rect x='0.500' y='0.500' width='20.500' height='16' fill='#2b2b2a' stroke='#e9e9e7' stroke-width='1.200'/>
<rect x='1.600' y='1.600' width='18.300' height='13.800' fill='none' stroke='#111' stroke-width='0.800'/>
<path d='M3.600 4.600l3 2.300l-3 2.300' fill='none' stroke='#f2f2f2' stroke-width='1.300'/>
<path d='M7.600 10.400h4' stroke='#f2f2f2' stroke-width='1.300'/>
</svg>
<svg style='position:absolute;left:294px;top:0.4px' width='24' height='23' viewBox='0 0 24 23' preserveAspectRatio='none'>
<defs><radialGradient id='gFxB' cx='0.450' cy='0.300' r='0.700'><stop offset='0' stop-color='#8fd4f4'/><stop offset='0.500' stop-color='#2a7fd0'/><stop offset='1' stop-color='#0b2f78'/></radialGradient>
<linearGradient id='gFxO' x1='0' y1='0' x2='0.600' y2='1'><stop offset='0' stop-color='#f09a1a'/><stop offset='0.500' stop-color='#e8600e'/><stop offset='1' stop-color='#d0400a'/></linearGradient></defs>
<circle cx='12.500' cy='10.500' r='9.200' fill='url(#gFxB)'/>
<path d='M1.600 4.200c0.600 1.400 1 1.600 1.400 1.800c1-1.600 2.600-2.800 4.600-3.200c-0.800 0.800-1.200 1.600-1.200 2.600c1 0.200 2 0.800 2.400 1.600l-2 1.400c-0.600 1.800 0.400 4.200 2.600 5c2.400 0.800 4.600-0.200 5.600-1.600c-1.200 0.400-2.600 0.200-3.400-0.600c1.800 0.200 3.800-0.800 5-0.400c1.600 0.600 0.600 3.400-1 5c2.600-1.200 4.600-4 4.800-7.200c0.600 1 1 2.600 0.900 4c0.600-2 0.600-4.400-0.300-6.400c1.200 1.400 1.800 3.600 1.800 5.600c0 6.200-4.800 11-10.800 11s-11.400-4.800-11.400-11c0-2.800 0.400-5.400 1-7.600z' fill='url(#gFxO)'/>
<path d='M18.800 4.200c2 1.600 3.400 4.400 3.200 7.600c-0.200 3.600-2.400 6.800-5.600 8.200c2-1.800 3.400-4.400 3.400-7.600c0-3-0.200-6-1-8.200z' fill='#f6c32a' opacity='0.850'/>
</svg>
<svg style='position:absolute;left:319.7px;top:1.7px' width='21' height='21' viewBox='0 0 21 21' preserveAspectRatio='none'>
<circle cx='10.300' cy='10.300' r='10.100' fill='#fff'/>
<path d='M10.300 10.300L1.553 5.250A10.100 10.100 0 0 1 19.047 5.250z' fill='#e33b2e'/>
<path d='M10.300 10.300L19.047 5.250A10.100 10.100 0 0 1 10.300 20.400z' fill='#fbd21d'/>
<path d='M10.300 10.300L10.300 20.400A10.100 10.100 0 0 1 1.553 5.250z' fill='#3aa648'/>
<path d='M10.300 5.800h8.500l-4.400 7.200z' fill='#e33b2e'/>
<path d='M14.200 12.550l-4.250 7.800l-3.550-7.800z' fill='#fbd21d'/>
<path d='M6.400 12.550l-4.700-7.400l8.600 0.650z' fill='#3aa648'/>
<path d='M10.300 5.800h8.600a10 10 0 0 0-0.500-0.900z' fill='#c8302a' opacity='0.400'/>
<circle cx='10.300' cy='10.300' r='4.700' fill='#f4f4f4'/>
<circle cx='10.300' cy='10.300' r='3.800' fill='#3f86d8'/>
</svg>
<svg style='position:absolute;left:815.4px;top:7.1px' width='19' height='10' viewBox='0 0 19 10' preserveAspectRatio='none'>
<rect x='0.500' y='0.500' width='16.400' height='9' rx='1.600' fill='#6b6963' stroke='#8f8d86' stroke-width='1'/>
<path d='M16.900 3h1.300c0.500 0 0.700 0.300 0.700 0.700v2.600c0 0.400-0.200 0.700-0.700 0.700h-1.300z' fill='#8f8d86'/>
<path d='M4.600 2.800l5.400 1.600l-1.200 0.800l4.200 2l-5.600-1.400l1.200-0.800z' fill='#cfccc4'/>
</svg>
<svg style='position:absolute;left:879px;top:4px' width='24' height='16.4' viewBox='0 0 24 16.4' preserveAspectRatio='none'>
<rect x='0.500' y='0.500' width='23' height='15.400' fill='#fff' stroke='#000' stroke-width='1'/>
<rect x='1' y='5.800' width='22' height='5' fill='#1616f0'/>
<rect x='1' y='10.600' width='22' height='4.800' fill='#f01616'/>
<rect x='1' y='5.300' width='22' height='1' fill='#8a8af8' opacity='0.700'/>
<rect x='1' y='10.200' width='22' height='0.900' fill='#c05ac0' opacity='0.500'/>
<rect x='1' y='14.200' width='22' height='1.200' fill='#f88' opacity='0.500'/>
</svg>
<svg style='position:absolute;left:911px;top:4.3px' width='18' height='17' viewBox='0 0 18 17' preserveAspectRatio='none'>
<path d='M4.200 0L8.700 3.500L13.200 0L17.400 3L12.900 6L17.400 9L13.700 11.500V12.700L8.700 16.800L3.700 12.700V11.500L0 9L4.500 6L0 3Z' fill='#dfdbd2'/>
</svg>
<svg style='position:absolute;left:946.6px;top:1.6px' width='16' height='21' viewBox='0 0 16 21' preserveAspectRatio='none'>
<defs><radialGradient id='gDl' cx='0.550' cy='0.620' r='0.500'><stop offset='0' stop-color='#b4cfea'/><stop offset='0.550' stop-color='#6a98cc'/><stop offset='1' stop-color='#3d6ca8'/></radialGradient></defs>
<path d='M8 0.300c1.600 4.200 7.600 8.600 7.600 13.400c0 4-3.400 6.800-7.600 6.800s-7.600-2.800-7.600-6.800c0-4.800 6-9.200 7.600-13.400z' fill='#3a66a0' stroke='#2c5288' stroke-width='0.600'/>
<circle cx='8.800' cy='13.400' r='4.600' fill='url(#gDl)' opacity='0.800'/>
<path d='M3.400 10.400c-1.600 3.400 0.400 7.600 4.600 8.200c2.600 0.400 4.800-0.600 6-2.400c-1.600 1.400-4.200 1.800-6.400 0.800c-3-1.400-4.400-4-4.200-6.600z' fill='#2f5a94'/>
</svg>
<svg style='position:absolute;left:977.4px;top:4.3px' width='9' height='16' viewBox='0 0 9 16' preserveAspectRatio='none'>
<path d='M0.800 4.600l7 6.800l-3.600 4v-15.200l3.600 4l-7 6.800' fill='none' stroke='#dfdbd2' stroke-width='1.300' stroke-linejoin='miter'/>
</svg>
<svg style='position:absolute;left:1000px;top:5.6px' width='22.2' height='12.4' viewBox='0 0 22.2 12.4' preserveAspectRatio='none'>
<rect x='0.400' y='0.400' width='21.400' height='11.600' rx='0.800' fill='#d9d8d4' stroke='#efeeeb' stroke-width='0.800'/>
<rect x='2' y='1.600' width='18.400' height='1.100' fill='#8a8984'/>
<rect x='2' y='3.600' width='12' height='5.600' fill='#5e5d59'/>
<path d='M2 5h12M2 6.400h12M2 7.800h12M4 3.600v5.600M6 3.600v5.600M8 3.600v5.600M10 3.600v5.600M12 3.600v5.600' stroke='#b5b4b0' stroke-width='0.500'/>
<rect x='15' y='3.600' width='2' height='5.600' fill='#6a6965'/><rect x='17.800' y='3.600' width='2.600' height='5.600' fill='#5e5d59'/>
<rect x='17.800' y='1.400' width='2.600' height='1.200' fill='#7ad03a'/>
<rect x='0.800' y='10.400' width='20.600' height='1.400' fill='#f4f3f0'/>
</svg>
<svg style='position:absolute;left:1066.8px;top:5.6px' width='20.4' height='14.5' viewBox='0 0 20.4 14.5' preserveAspectRatio='none'>
<g fill='none' stroke='#dfdbd2' stroke-width='1.900' stroke-linecap='butt'>
<path d='M0.700 5.700a13.200 13.200 0 0 1 19 0'/>
<path d='M3.700 8.700a9 9 0 0 1 13 0'/>
<path d='M6.700 11.500a5 5 0 0 1 7 0'/>
</g>
<path d='M10.200 11.800l1.900 1.500l-1.900 1.200l-1.900-1.200z' fill='#dfdbd2'/>
</svg>
<svg style='position:absolute;left:1101.8px;top:3.7px' width='20' height='17.5' viewBox='0 0 20 17.5' preserveAspectRatio='none'>
<path d='M0.400 6.300h2.800l4-4.100v13l-4-4.100h-2.800z' fill='#dfdbd2'/>
<g fill='none' stroke='#dfdbd2' stroke-width='1.500' stroke-linecap='butt'>
<path d='M9.400 5.400c1.300 2 1.300 4.600 0 6.600'/>
<path d='M12.400 3c2.500 3.300 2.500 8.100 0 11.400'/>
<path d='M15.600 0.500c3.800 4.800 3.800 11.600 0 16.400'/>
</g>
</svg>
<svg style='position:absolute;left:1138px;top:5.9px' width='18' height='12.2' viewBox='0 0 18 12.2' preserveAspectRatio='none'>
<rect x='0' y='0' width='18' height='12.200' rx='0.800' fill='#dfdbd2'/>
<path d='M1.400 1.400l7.600 7l7.600-7' fill='none' stroke='#3f3e3a' stroke-width='1.100'/>
<path d='M1.400 10.800l5-4.600M16.600 10.800l-5-4.600' stroke='#3f3e3a' stroke-width='1'/>
</svg>
<svg style='position:absolute;left:1219.8px;top:4.5px' width='18' height='16' viewBox='0 0 18 16' preserveAspectRatio='none'>
<circle cx='7.800' cy='7.800' r='7.800' fill='#dfdbd2'/>
<path d='M10 13.500c2 1.600 5 2 8 1.400c-2-0.600-3.600-2.400-4-4.600z' fill='#dfdbd2'/>
<rect x='2.800' y='7' width='2' height='2' fill='#3f3e3a'/><rect x='6.400' y='7' width='2' height='2' fill='#3f3e3a'/><rect x='10' y='7' width='2' height='2' fill='#3f3e3a'/>
</svg>
<svg style='position:absolute;left:1342px;top:4.4px' width='14.2' height='14.5' viewBox='0 0 14.2 14.5' preserveAspectRatio='none'>
<path d='M4.600 2.700a6.200 6.200 0 1 0 5 0' fill='none' stroke='#dfdbd2' stroke-width='1.600' stroke-linecap='butt'/>
<path d='M7.100 0v7.400' stroke='#dfdbd2' stroke-width='1.600'/>
</svg>
<svg style='position:absolute;left:11.4px;top:30.4px' width='16' height='16' viewBox='0 0 16 16' preserveAspectRatio='none'>
<defs><linearGradient id='gWc' x1='0' y1='0' x2='0' y2='1'><stop offset='0' stop-color='#f28a66'/><stop offset='1' stop-color='#de4c1e'/></linearGradient></defs>
<circle cx='8' cy='8' r='7.400' fill='url(#gWc)' stroke='#6e2a12' stroke-width='0.900'/>
<path d='M5.300 5.300l5.400 5.400M10.700 5.300l-5.400 5.400' stroke='#3c1a0e' stroke-width='1.300'/>
</svg>
<svg style='position:absolute;left:29.4px;top:30.4px' width='16' height='16' viewBox='0 0 16 16' preserveAspectRatio='none'><circle cx='8' cy='8' r='7.400' fill='url(#gWb)' stroke='#34332f' stroke-width='0.900'/><path d='M4.700 8h6.600' stroke='#3a3935' stroke-width='1.300'/></svg>
<svg style='position:absolute;left:47.4px;top:30.4px' width='16' height='16' viewBox='0 0 16 16' preserveAspectRatio='none'><circle cx='8' cy='8' r='7.400' fill='url(#gWb)' stroke='#34332f' stroke-width='0.900'/><rect x='4.800' y='5.600' width='6.400' height='4.800' fill='none' stroke='#3a3935' stroke-width='1.200'/></svg>
<svg style='position:absolute;left:0.6px;top:744.6px' width='23' height='23' viewBox='0 0 23 23' preserveAspectRatio='none'>
<defs><radialGradient id='gSd' cx='0.650' cy='0.550' r='0.750'><stop offset='0' stop-color='#cf92cf'/><stop offset='0.600' stop-color='#b552b5'/><stop offset='1' stop-color='#9a2c9a'/></radialGradient></defs>
<rect x='0.500' y='0.500' width='22' height='22' rx='3.200' fill='#4a4944' stroke='#2d2c29' stroke-width='1'/>
<rect x='1.200' y='2.600' width='20.600' height='2.700' fill='#fbf9e6'/>
<rect x='1.200' y='2.200' width='20.600' height='0.600' fill='#8a8a5a'/>
<rect x='1.200' y='5.300' width='20.600' height='1' fill='#6e7232'/>
<rect x='1.200' y='6.300' width='20.600' height='14' fill='url(#gSd)'/>
<rect x='1.200' y='19.600' width='20.600' height='0.900' fill='#7a1a7a'/>
<rect x='2.800' y='7.400' width='2.800' height='3.400' fill='#f6eef6'/><rect x='2.800' y='12.600' width='2.800' height='3.400' fill='#f6eef6'/>
</svg>
<svg style='position:absolute;left:42.6px;top:749px' width='14' height='16' viewBox='0 0 14 16' preserveAspectRatio='none'>
<path d='M3.400 2v13.500M0.800 5h4M0.800 12h4' stroke='#2b2a27' stroke-width='1' fill='none'/>
<path d='M3.400 4.200h4.400c3 0 5.200 1.800 5.200 4.300s-2.200 4.300-5.200 4.300h-4.400' stroke='#2b2a27' stroke-width='1.100' fill='none'/>
<path d='M7 6l2.200 4.400h-4.400z' fill='#b5651f' opacity='0.900'/>
<path d='M4.600 9h5' stroke='#8a4a14' stroke-width='0.600'/>
<rect x='2.300' y='0.300' width='2.200' height='2.200' fill='#2cb02c'/>
</svg>
<svg style='position:absolute;left:182.7px;top:748.6px' width='14.6' height='14.6' viewBox='0 0 20.600 20.600' preserveAspectRatio='none'>
<circle cx='10.300' cy='10.300' r='10.100' fill='#fff'/>
<path d='M10.300 10.300L1.553 5.250A10.100 10.100 0 0 1 19.047 5.250z' fill='#e33b2e'/>
<path d='M10.300 10.300L19.047 5.250A10.100 10.100 0 0 1 10.300 20.400z' fill='#fbd21d'/>
<path d='M10.300 10.300L10.300 20.400A10.100 10.100 0 0 1 1.553 5.250z' fill='#3aa648'/>
<path d='M10.300 5.800h8.500l-4.400 7.200z' fill='#e33b2e'/>
<path d='M14.200 12.550l-4.250 7.800l-3.550-7.800z' fill='#fbd21d'/>
<path d='M6.400 12.550l-4.700-7.400l8.600 0.650z' fill='#3aa648'/>
<path d='M10.300 5.800h8.600a10 10 0 0 0-0.500-0.900z' fill='#c8302a' opacity='0.400'/>
<circle cx='10.300' cy='10.300' r='4.700' fill='#f4f4f4'/>
<circle cx='10.300' cy='10.300' r='3.800' fill='#3f86d8'/>
</svg>
<svg style='position:absolute;left:323.3px;top:748.6px' width='12.4' height='15.4' viewBox='0 0 12.4 15.4' preserveAspectRatio='none'>
<path d='M0.400 0.400h8.600l3 3v11.600h-11.600z' fill='#6e6c66' stroke='#8e8c86' stroke-width='0.800'/>
<path d='M9 0.400v3h3' fill='#55534e' stroke='#8e8c86' stroke-width='0.600'/>
<rect x='2.200' y='4.600' width='8' height='6' fill='#4d4b46' stroke='#a5a39c' stroke-width='0.700'/>
<path d='M3.400 6.600h5.400M3.400 8.400h4' stroke='#a5a39c' stroke-width='0.700'/>
<path d='M6.200 10.600v2M4.200 13h4' stroke='#a5a39c' stroke-width='0.800'/>
</svg>
<svg style='position:absolute;left:463.6px;top:750.2px' width='15' height='12' viewBox='0 0 15 12' preserveAspectRatio='none'>
<path d='M3.600 5.600l5.400-2.400l3 4.600z' fill='none' stroke='#22211e' stroke-width='0.900'/>
<circle cx='3.400' cy='5.600' r='3' fill='#c81414'/><circle cx='2.600' cy='4.800' r='1' fill='#f06a6a'/>
<circle cx='8.600' cy='3.200' r='2.700' fill='#5a5af0'/><circle cx='8' cy='2.400' r='1' fill='#b4b4ff'/>
<circle cx='11.600' cy='8.200' r='3.200' fill='#f0f01e'/><circle cx='10.800' cy='7.200' r='1.100' fill='#ffffc0'/>
</svg>
<svg style='position:absolute;left:604px;top:750px' width='14' height='12' viewBox='0 0 14 12' preserveAspectRatio='none'>
<rect x='0.600' y='0.600' width='12.800' height='10.800' fill='#d6d9d2' stroke='#fdfdfc' stroke-width='1.200'/>
<rect x='0' y='0' width='14' height='2.400' fill='#3465a4'/>
<rect x='0' y='0' width='14' height='0.700' fill='#729fcf'/>
</svg>
<svg style='position:absolute;left:745px;top:750px' width='14' height='12' viewBox='0 0 14 12' preserveAspectRatio='none'>
<rect x='0.600' y='0.600' width='12.800' height='10.800' fill='#d6d9d2' stroke='#fdfdfc' stroke-width='1.200'/>
<rect x='0' y='0' width='14' height='2.400' fill='#3465a4'/>
<rect x='0' y='0' width='14' height='0.700' fill='#729fcf'/>
</svg>
<svg style='position:absolute;left:884px;top:748px' width='15.8' height='15.8' viewBox='0 0 15.8 15.8' preserveAspectRatio='none'>
<defs><linearGradient id='gWs' x1='0' y1='0' x2='0' y2='1'><stop offset='0' stop-color='#3a9be0'/><stop offset='1' stop-color='#1668ae'/></linearGradient></defs>
<rect x='0.500' y='0.500' width='14.800' height='14.800' rx='1.600' fill='url(#gWs)' stroke='#0c2c50' stroke-width='1'/>
<path d='M1.200 11.600c3.600 0 4.400-2.800 5.600-5.800c0.800-2 1.800-3.400 3.400-3.800c-0.800 2.400-0.400 6.400 1 9.600h3.600' fill='none' stroke='#0e2c4a' stroke-width='1.100'/>
<path d='M1 12.400h14' stroke='#0e3a66' stroke-width='0.700'/>
</svg>
<svg style='position:absolute;left:1027px;top:748.6px' width='11.4' height='14.6' viewBox='0 0 11.4 14.6' preserveAspectRatio='none'>
<path d='M0.400 0.400h7.600l3 3v10.800h-10.600z' fill='#75736d' stroke='#8e8c86' stroke-width='0.800'/>
<path d='M8 0.400v3h3' fill='#55534e' stroke='#8e8c86' stroke-width='0.600'/>
<path d='M2 3h4.600M2 5h6.800M2 7h6.800' stroke='#a8a69f' stroke-width='0.900'/>
<rect x='4.800' y='8.400' width='4.400' height='4' fill='#55637a' stroke='#9aa4b4' stroke-width='0.700'/>
<path d='M2 9.400h2M2 11.400h2' stroke='#a8a69f' stroke-width='0.900'/>
</svg>
<svg style='position:absolute;left:1164.8px;top:748.6px' width='16.4' height='14.8' viewBox='0 0 16.4 14.8' preserveAspectRatio='none'>
<path d='M0.500 1.200h5.600l1.400 1.600h6.300v11h-13.300z' fill='#f1efec' stroke='#cfcdc8' stroke-width='0.700'/>
<path d='M2.200 4.400h13.600v10h-13.600z' fill='url(#gFold)' stroke='#c83c0c' stroke-width='0.700'/>
<path d='M2.800 5.100h12.400' stroke='#f8c89a' stroke-width='0.700'/>
</svg>
<svg style='position:absolute;left:1343.6px;top:745px' width='19.2' height='23.6' viewBox='0 0 19.2 23.6' preserveAspectRatio='none'>
<defs><linearGradient id='gTr' x1='0' y1='0' x2='1' y2='0'><stop offset='0' stop-color='#9a9a98'/><stop offset='0.400' stop-color='#e2e2e0'/><stop offset='0.700' stop-color='#c4c4c2'/><stop offset='1' stop-color='#7e7e7c'/></linearGradient></defs>
<path d='M1.200 3.400h16.800l-1.800 18.800c-0.200 1-1.600 1.400-6.600 1.400s-6.400-0.400-6.600-1.400z' fill='url(#gTr)' stroke='#6a6a68' stroke-width='0.600'/>
<path d='M3.400 7.200l2-1.400l2.200 1.600l2.400-1.800l2.400 1.600l2-1.200l1.400 2.400l-0.800 3.400l0.600 3l-1.600 3l-2.400 2l-2.600-1l-2.800 1.200l-2-2.600l0.400-3.400l-1-3z' fill='#f6f6f4' opacity='0.920'/>
<path d='M5 9l2.600 1.800l2.400-1.600l2.600 2l-1.400 3l-2.800 0.800l-2.600-1.600zM8 15.600l2 1.600l2.200-1.200' fill='none' stroke='#bcbcba' stroke-width='0.700'/>
<path d='M3.400 5.600l1.400 17M6.400 5.600l0.800 17.600M9.600 5.600v17.800M12.800 5.600l-0.800 17.600M15.800 5.600l-1.400 17M2 9.200h15.200M2.400 13h14.400M2.800 16.800h13.600M3.200 20.400h12.800' stroke='#7a7a78' stroke-width='0.450' fill='none' opacity='0.800'/>
<ellipse cx='9.600' cy='3.400' rx='8.800' ry='2.300' fill='#c8c8c6' stroke='#767674' stroke-width='0.800'/>
<ellipse cx='9.600' cy='3.600' rx='7' ry='1.400' fill='#8e8e8c'/>
</svg>
<svg style='position:absolute;left:93.1px;top:542.8px' width='15' height='23' viewBox='0 0 15 23' preserveAspectRatio='none'>
<path d='M2.200 2.600v15.600l3.500-3.200l2.400 5l2.400-1l-2.300-5.100h4.500z' fill='#000' opacity='0.250' transform='translate(0.800,0.900)'/><path d='M1.600 1.800v16.200l3.700-3.400l2.500 5.200l2.300-1l-2.400-5.200h4.700z' fill='#fdfdfd' stroke='#000' stroke-width='1.300' stroke-linejoin='miter'/>
</svg>
</body></html>
